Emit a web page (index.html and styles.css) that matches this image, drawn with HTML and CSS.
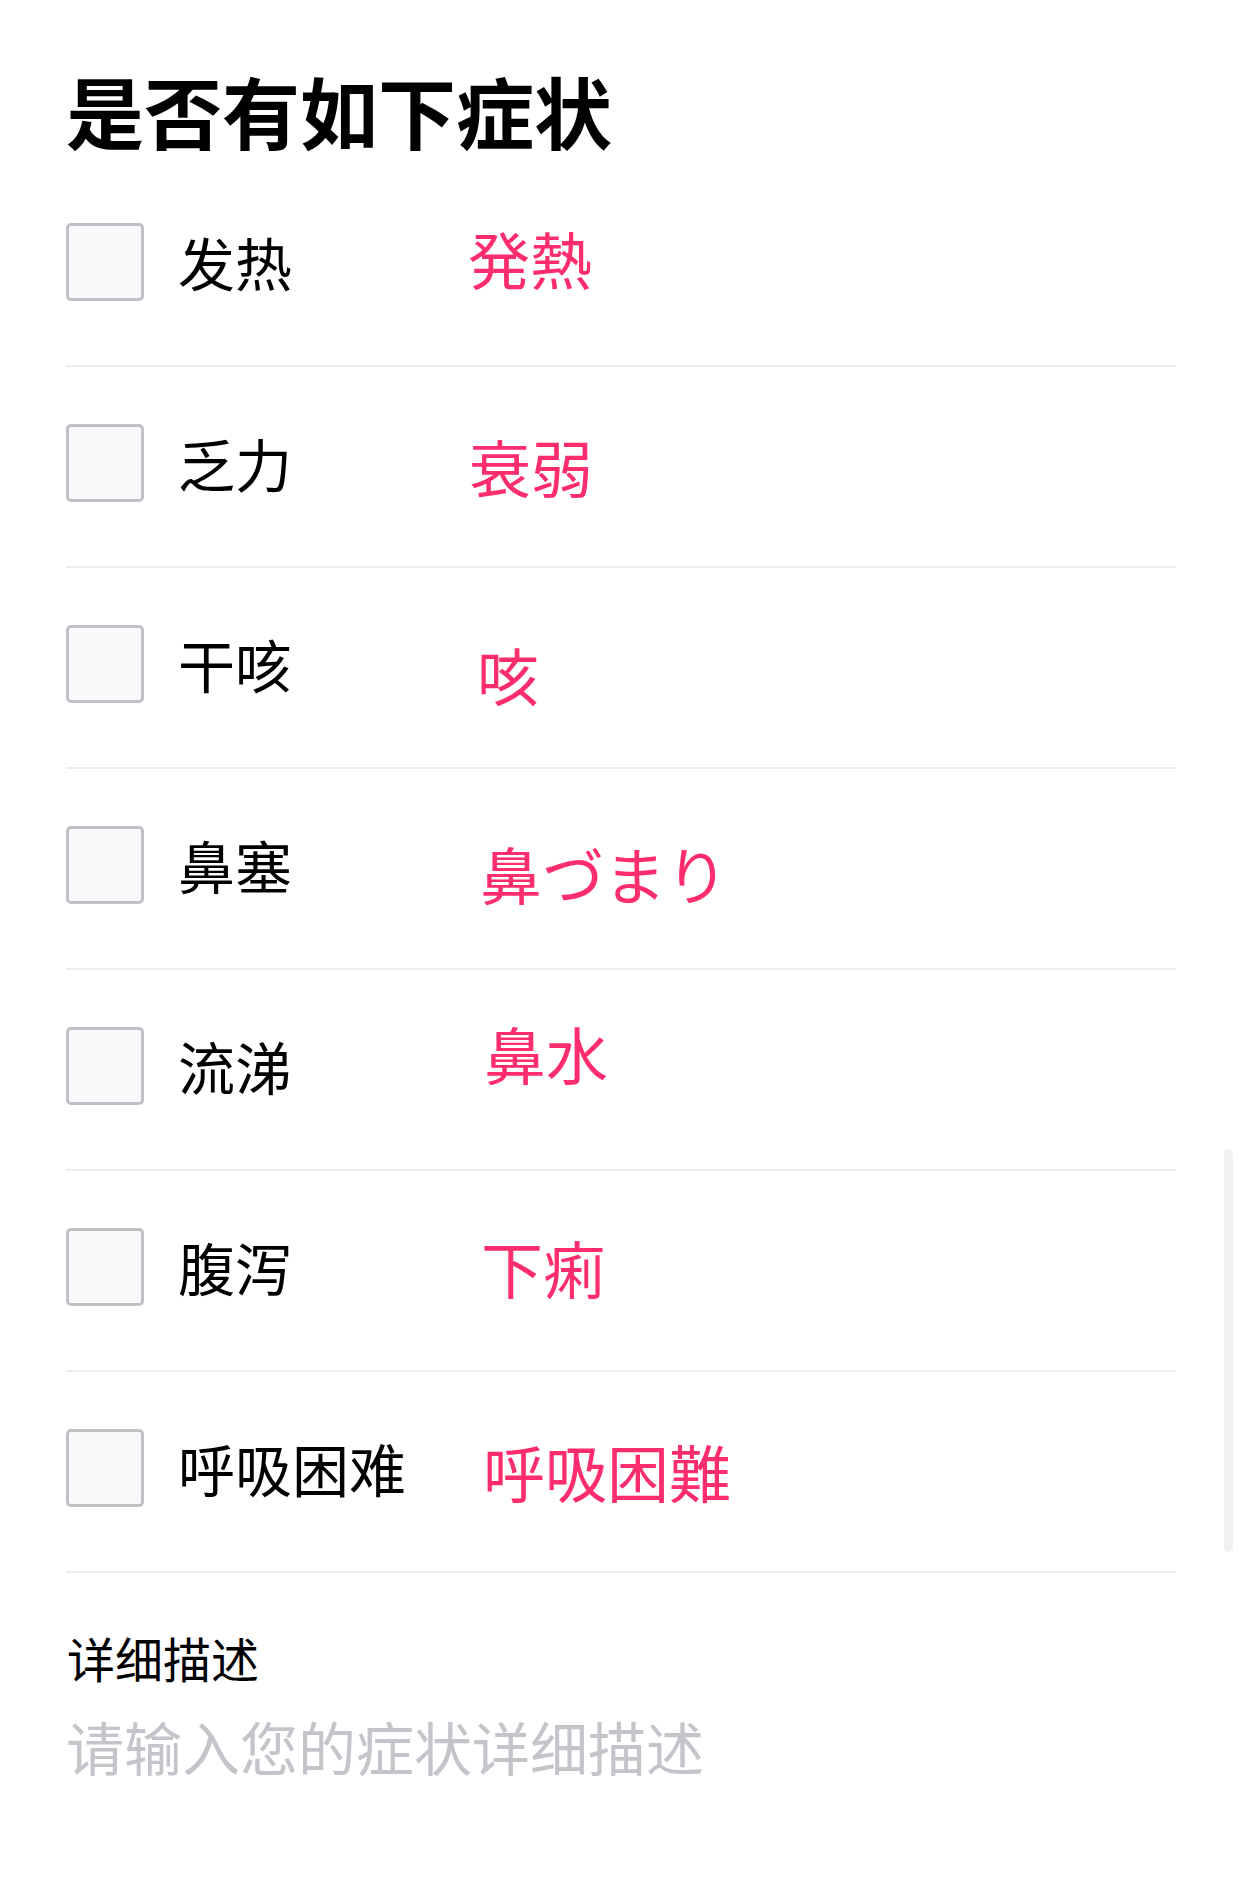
FILE: index.html
```html
<!DOCTYPE html>
<html lang="zh-CN">
<head>
<meta charset="utf-8">
<title>是否有如下症状</title>
<link rel="stylesheet" href="styles.css">
</head>
<body>
<main class="page">
  <h1 class="title">是否有如下症状</h1>
  <ul class="symptoms">
    <li class="row">
      <span class="box"></span>
      <span class="label">发热</span>
      <span class="jp jp-1" lang="ja">発熱</span>
    </li>
    <li class="row">
      <span class="box"></span>
      <span class="label">乏力</span>
      <span class="jp jp-2" lang="ja">衰弱</span>
    </li>
    <li class="row">
      <span class="box"></span>
      <span class="label">干咳</span>
      <span class="jp jp-3" lang="ja">咳</span>
    </li>
    <li class="row">
      <span class="box"></span>
      <span class="label">鼻塞</span>
      <span class="jp jp-4" lang="ja">鼻づまり</span>
    </li>
    <li class="row">
      <span class="box"></span>
      <span class="label">流涕</span>
      <span class="jp jp-5" lang="ja">鼻水</span>
    </li>
    <li class="row">
      <span class="box"></span>
      <span class="label">腹泻</span>
      <span class="jp jp-6" lang="ja">下痢</span>
    </li>
    <li class="row">
      <span class="box"></span>
      <span class="label">呼吸困难</span>
      <span class="jp jp-7" lang="ja">呼吸困難</span>
    </li>
  </ul>
  <section class="detail">
    <div class="detail-title">详细描述</div>
    <div class="detail-input">请输入您的症状详细描述</div>
  </section>
</main>
<div class="scrollbar"></div>
</body>
</html>
```

FILE: styles.css
```css
html, body {
  margin: 0;
  padding: 0;
  background: #ffffff;
}

body {
  width: 1242px;
  height: 1880px;
  overflow: hidden;
  font-family: "Noto Sans CJK SC", "Noto Sans", sans-serif;
  color: #000000;
}

.page {
  padding: 0 66px;
}

.title {
  margin: 0;
  padding-top: 71px;
  margin-bottom: 17px;
  font-size: 78px;
  line-height: 78px;
  font-weight: 700;
  letter-spacing: 0;
}

.symptoms {
  list-style: none;
  margin: 0;
  padding: 0;
}

.row {
  box-sizing: border-box;
  height: 201px;
  padding-bottom: 8px;
  border-bottom: 2px solid #ececec;
  display: flex;
  align-items: center;
}

.box {
  box-sizing: border-box;
  flex: none;
  width: 78px;
  height: 78px;
  margin-right: 34px;
  border: 3px solid #bfc1c7;
  border-radius: 5px;
  background: #f9f9fb;
}

.label {
  flex: none;
  width: 296px;
  font-size: 57px;
  line-height: 57px;
}

.jp {
  font-family: "Noto Sans CJK JP", "Noto Sans CJK SC", sans-serif;
  font-size: 62px;
  line-height: 62px;
  color: #fe2d6e;
  white-space: nowrap;
}

.jp-1 { transform: translate(-6px, -4px); }
.jp-2 { transform: translate(-5px, 3px); }
.jp-3 { transform: translate(3px, 10px); }
.jp-4 { transform: translate(6px, 8px); }
.jp-5 { transform: translate(10px, -13px); }
.jp-6 { transform: translate(7px, 0px); }
.jp-7 { transform: translate(9px, 3px); }

.detail {
  padding-top: 60px;
}

.detail-title {
  font-size: 48px;
  line-height: 48px;
  padding-left: 1px;
}

.detail-input {
  margin-top: 36px;
  font-size: 58px;
  line-height: 58px;
  color: #c4c5cb;
}

.scrollbar {
  position: fixed;
  right: 9px;
  top: 1149px;
  width: 9px;
  height: 403px;
  border-radius: 5px;
  background: #f1f1f1;
}
```
